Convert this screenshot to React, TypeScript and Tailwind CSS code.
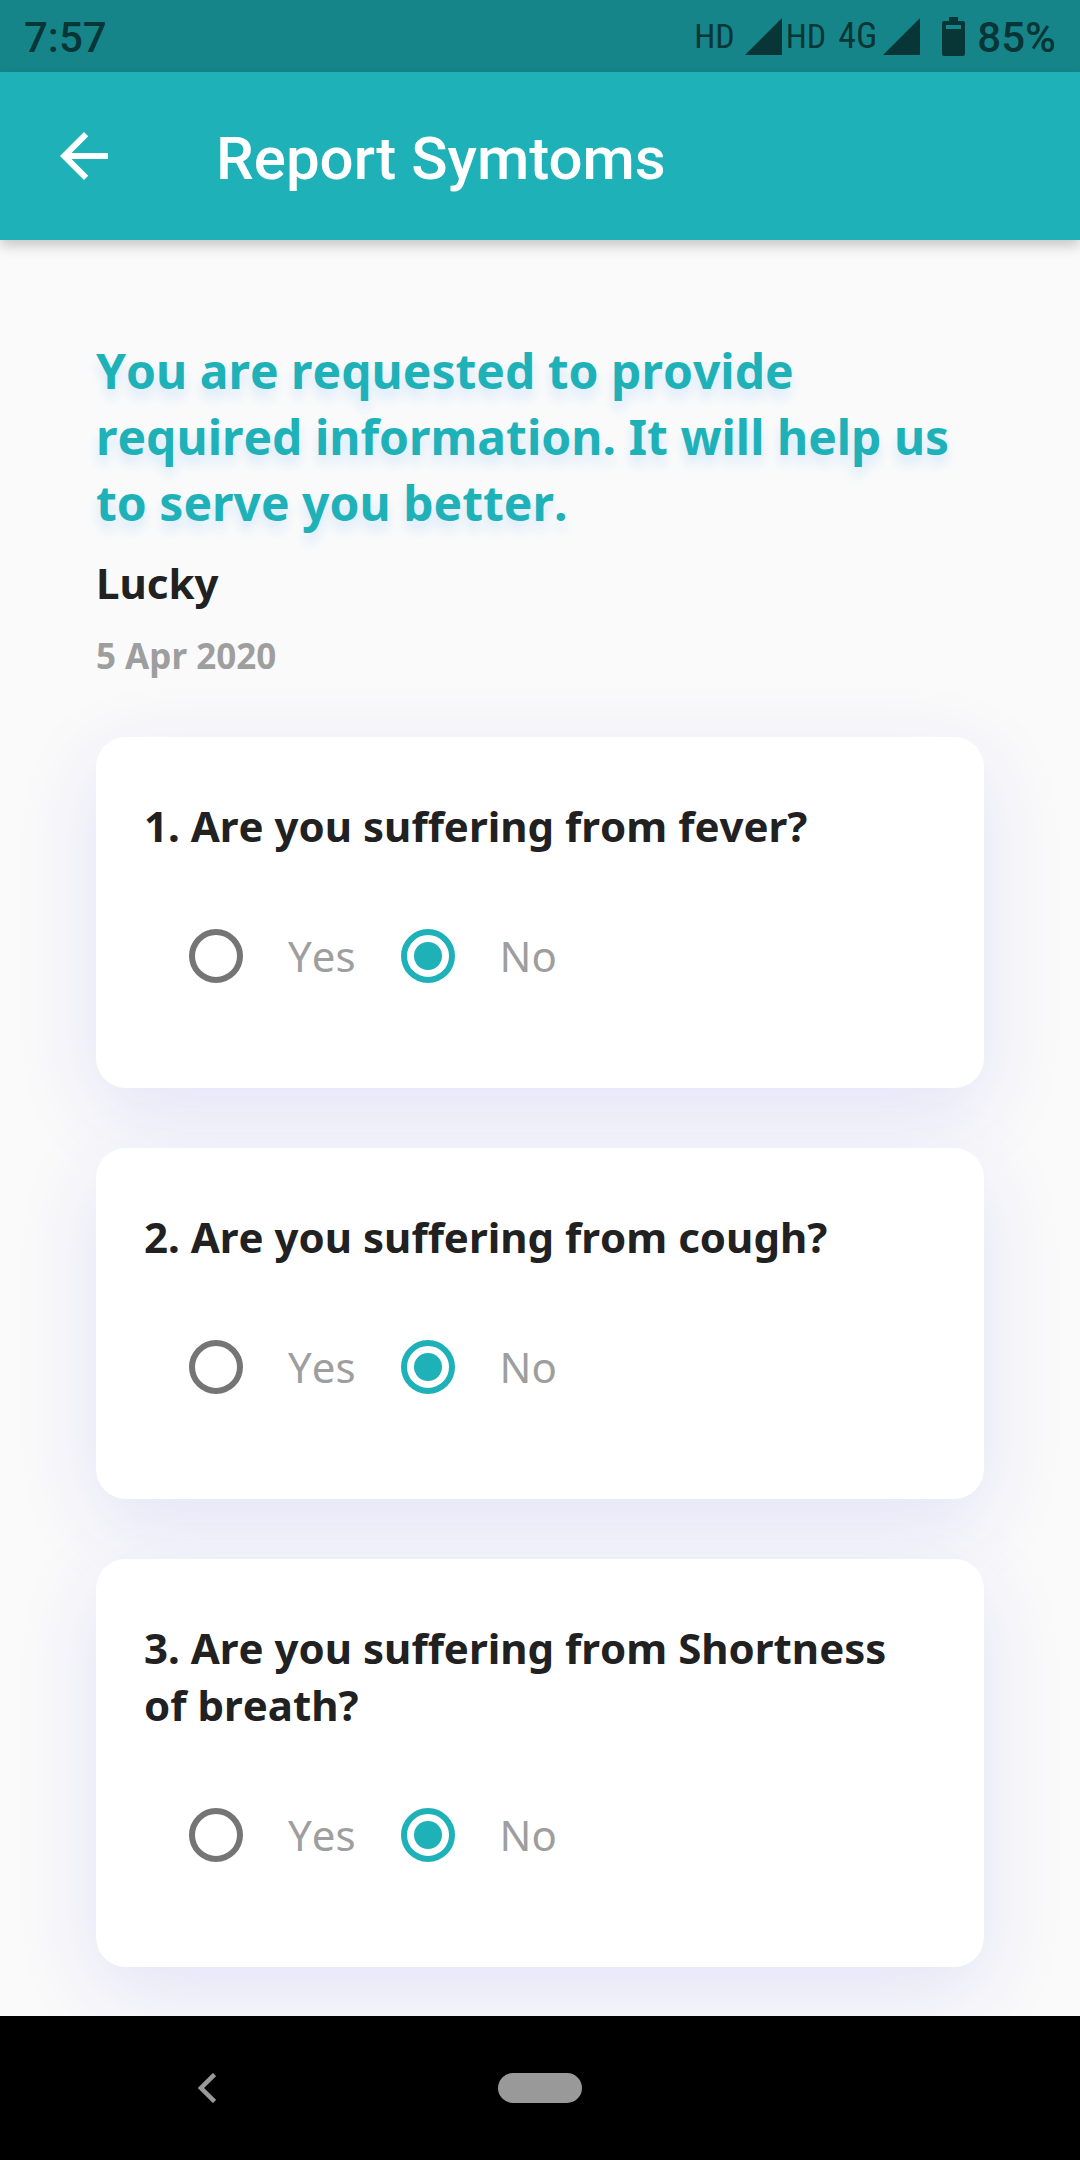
import { useState } from "react";

type Answer = "Yes" | "No";

const questions = [
  "1. Are you suffering from fever?",
  "2. Are you suffering from cough?",
  "3. Are you suffering from Shortness of breath?",
];

function SignalIcon() {
  return (
    <svg className="h-[37px] w-[37px]" viewBox="0 0 37 37" fill="currentColor" aria-hidden="true">
      <path d="M37 0v37H0z" />
    </svg>
  );
}

function BatteryIcon() {
  return (
    <svg className="h-[39px] w-[23px]" viewBox="0 0 23 39" fill="currentColor" aria-hidden="true">
      <path
        fillRule="evenodd"
        d="M7 0h9v4h5a2 2 0 0 1 2 2v31a2 2 0 0 1-2 2H2a2 2 0 0 1-2-2V6a2 2 0 0 1 2-2h5zM4 8v4h15V8z"
      />
    </svg>
  );
}

function StatusBar() {
  return (
    <div className="flex h-18 items-center justify-between bg-[#168589] px-6 font-['Roboto',sans-serif] text-[42px] leading-none font-medium text-[#083637]">
      <time className="pt-1">7:57</time>
      <div className="flex items-center">
        <span className="mr-2.5 font-['Roboto_Condensed','Liberation_Sans_Narrow','Roboto',sans-serif] text-[34px] font-normal">HD</span>
        <SignalIcon />
        <span className="ml-1 font-['Roboto_Condensed','Liberation_Sans_Narrow','Roboto',sans-serif] text-[34px] font-normal">HD</span>
        <span className="mr-1.5 ml-3 font-['Roboto_Condensed','Liberation_Sans_Narrow','Roboto',sans-serif] text-[36px] font-normal">4G</span>
        <SignalIcon />
        <span className="mr-3 ml-[22px]">
          <BatteryIcon />
        </span>
        <span className="pt-1">85%</span>
      </div>
    </div>
  );
}

function AppBar() {
  return (
    <header className="relative z-10 flex h-[168px] items-center bg-[#1eb1b8] px-12 text-white shadow-[0_6px_12px_rgba(0,0,0,0.2)]">
      <button type="button" aria-label="Back" className="mr-24 size-18">
        <svg viewBox="0 0 24 24" className="size-18" fill="currentColor" aria-hidden="true">
          <path d="M20 11H7.83l5.59-5.59L12 4l-8 8 8 8 1.41-1.41L7.83 13H20v-2z" />
        </svg>
      </button>
      <h1 className="pt-1.5 font-['Roboto',sans-serif] text-[60px] leading-[72px] font-medium">Report Symtoms</h1>
    </header>
  );
}

function QuestionCard({ id, text }: { id: string; text: string }) {
  const [answer, setAnswer] = useState<Answer>("No");
  return (
    <section
      role="radiogroup"
      aria-labelledby={`${id}-title`}
      className="rounded-[30px] bg-white px-12 py-[60px] shadow-[0_24px_84px_#e2e2f8]"
    >
      <h2 id={`${id}-title`} className="mb-[30px] text-[42px] leading-[57px] font-bold text-[#212121]">
        {text}
      </h2>
      <div className="flex items-center text-[42px] leading-[56px] text-[#9e9e9e]">
        {(["Yes", "No"] as const).map((option) => (
          <div key={option} className="flex items-center">
            <input
              type="radio"
              id={`${id}-${option}`}
              name={id}
              value={option}
              checked={answer === option}
              onChange={() => setAnswer(option)}
              className="m-[45px] grid size-[54px] appearance-none place-items-center rounded-full border-6 border-[#757575] checked:border-[#1eb1b8] checked:before:size-7 checked:before:rounded-full checked:before:bg-[#1eb1b8] checked:before:content-['']"
            />
            <label htmlFor={`${id}-${option}`}>{option}</label>
          </div>
        ))}
      </div>
    </section>
  );
}

function NavigationBar() {
  return (
    <nav className="grid h-36 grid-cols-[1fr_84px_1fr] items-center bg-black text-[#999999]">
      <button type="button" aria-label="Previous screen" className="ml-[180px] flex size-[54px] items-center justify-center">
        <svg viewBox="0 0 18 30" className="h-[30px] w-[18px]" fill="none" stroke="currentColor" strokeWidth="4.500" aria-hidden="true">
          <path d="M16.500 1.500 3 15l13.500 13.500" />
        </svg>
      </button>
      <button type="button" aria-label="Home" className="h-[30px] rounded-full bg-[#999999]" />
    </nav>
  );
}

export default function App() {
  return (
    <div className="flex min-h-screen flex-col bg-[#fafafa] font-['Noto_Sans',sans-serif]">
      <StatusBar />
      <AppBar />
      <main className="flex-1 overflow-hidden px-24 pt-[98px] pb-12 [font-kerning:none]">
        <p className="text-[48px] leading-[66px] font-bold text-[#1eb1b8] [text-shadow:0_9px_12px_#d5e8fb]">
          You are requested to provide required information. It will help us to serve you better.
        </p>
        <p className="mt-[18px] text-[42px] leading-[57px] font-bold text-[#212121]">Lucky</p>
        <p className="mt-5 text-[35px] leading-[50px] font-bold text-[#9e9e9e]">5 Apr 2020</p>
        <div className="mt-14 flex flex-col gap-[60px]">
          {questions.map((text, index) => (
            <QuestionCard key={text} id={`question-${index + 1}`} text={text} />
          ))}
        </div>
      </main>
      <NavigationBar />
    </div>
  );
}
